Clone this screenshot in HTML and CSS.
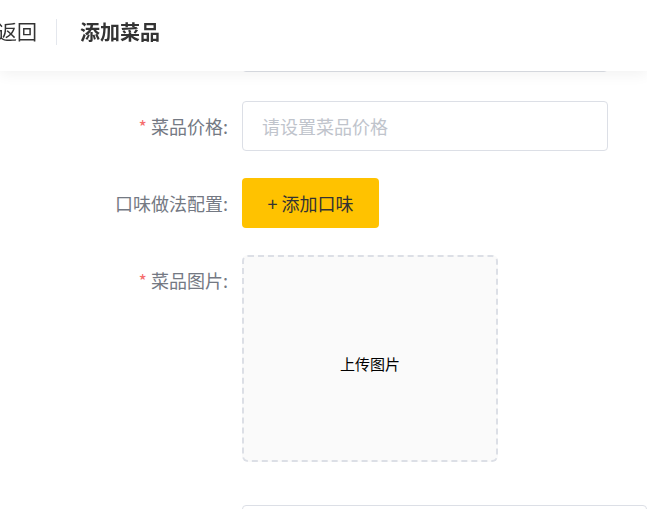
FILE: index.html
```html
<!DOCTYPE html>
<html lang="zh-CN">
<head>
<meta charset="utf-8">
<title>添加菜品</title>
<link rel="stylesheet" href="styles.css">
</head>
<body>
<header class="header">
  <span class="back">返回</span>
  <span class="divider"></span>
  <span class="title">添加菜品</span>
</header>
<main class="page">
  <form class="form">
    <div class="row row-first">
      <label class="label"></label>
      <div class="input"></div>
    </div>
    <div class="row row-price">
      <label class="label"><span class="req">*</span> 菜品价格:</label>
      <div class="input"><span class="placeholder">请设置菜品价格</span></div>
    </div>
    <div class="row row-flavor">
      <label class="label">口味做法配置:</label>
      <button type="button" class="btn">+ 添加口味</button>
    </div>
    <div class="row row-upload">
      <label class="label"><span class="req">*</span> 菜品图片:</label>
      <div class="upload">上传图片</div>
    </div>
    <div class="row">
      <label class="label"></label>
      <div class="textarea"></div>
    </div>
  </form>
</main>
</body>
</html>
```
FILE: styles.css
```css
* { box-sizing: border-box; }
html, body { margin: 0; padding: 0; background: #fff; overflow: hidden; }
body {
  font-family: "Noto Sans CJK SC", "Noto Sans", sans-serif;
  width: 647px;
  height: 509px;
}
.header {
  position: fixed;
  top: 0;
  left: 0;
  right: 0;
  height: 71px;
  padding-bottom: 7px;
  background: #fff;
  box-shadow: 0 3px 14px rgba(0, 0, 0, 0.06);
  display: flex;
  align-items: center;
  z-index: 10;
}
.back {
  margin-left: -3px;
  font-size: 20px;
  color: #333;
  line-height: 26px;
}
.divider {
  width: 1px;
  height: 26px;
  background: #e4e7ed;
  margin-left: 19px;
}
.title {
  margin-left: 23px;
  font-size: 20px;
  font-weight: 700;
  color: #333;
  line-height: 26px;
}
.page { padding-top: 22px; }
.form { display: flex; flex-direction: column; }
.row {
  display: flex;
  align-items: flex-start;
  margin-bottom: 28px;
}
.row-first { margin-bottom: 29px; }
.row-price { margin-bottom: 27px; }
.row-flavor { margin-bottom: 27px; }
.row-upload { margin-bottom: 43px; }
.label {
  width: 242px;
  flex: none;
  padding-right: 14px;
  text-align: right;
  font-size: 18px;
  line-height: 50px;
  color: #747983;
  white-space: nowrap;
}
.req { color: #f56c6c; }
.input {
  width: 366px;
  height: 50px;
  border: 1px solid #dcdfe6;
  border-radius: 4px;
  padding: 0 19px;
  display: flex;
  align-items: center;
}
.placeholder {
  font-size: 18px;
  color: #c0c4cc;
}
.btn {
  width: 137px;
  height: 50px;
  border: none;
  border-radius: 4px;
  background: #ffc200;
  color: #333;
  font-family: inherit;
  font-size: 18px;
  padding: 0;
}
.upload {
  width: 256px;
  height: 207px;
  border: 2px dashed #dcdfe6;
  border-radius: 6px;
  background: #fafafa;
  display: flex;
  align-items: center;
  justify-content: center;
  padding-top: 10px;
  font-size: 15px;
  color: #000;
}
.textarea {
  width: 500px;
  height: 120px;
  border: 1px solid #dcdfe6;
  border-radius: 4px;
}
```
